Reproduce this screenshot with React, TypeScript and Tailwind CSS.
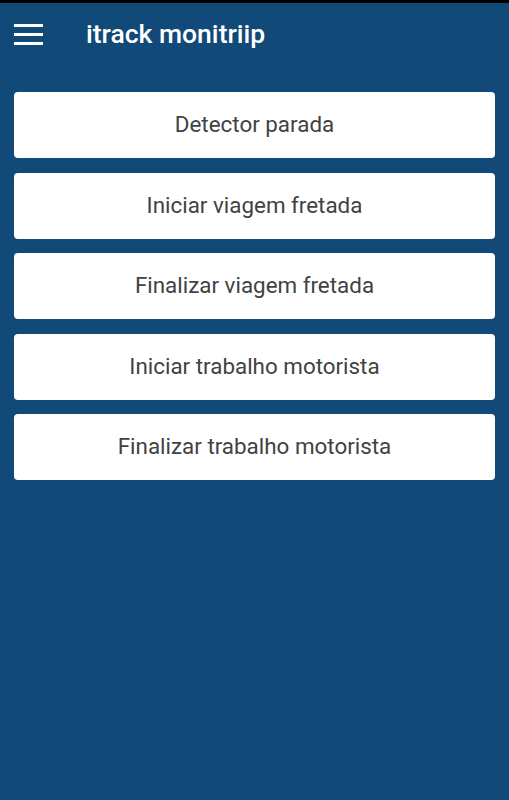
import { useState } from 'react';

const items = [
  'Detector parada',
  'Iniciar viagem fretada',
  'Finalizar viagem fretada',
  'Iniciar trabalho motorista',
  'Finalizar trabalho motorista',
];

export default function App() {
  const [selected, setSelected] = useState<string | null>(null);

  return (
    <div className="w-[509px] h-[800px] bg-[#114a79] font-['Roboto',sans-serif] flex flex-col">
      <div className="h-[3px] bg-black" />
      <header className="h-[62px] flex items-center">
        <button className="ml-[14px] w-[29px] flex flex-col gap-[6px]">
          <span className="h-[3px] bg-white" />
          <span className="h-[3px] bg-white" />
          <span className="h-[3px] bg-white" />
        </button>
        <h1 className="ml-[43px] text-white text-[26.5px] font-medium">itrack monitriip</h1>
      </header>

      <div className="px-[14px] pt-[27px] flex flex-col gap-[14.5px]">
        {items.map((item) => (
          <button
            key={item}
            onClick={() => setSelected(item)}
            className={`h-[66px] w-full bg-white rounded-[4px] text-[22.4px] text-[#424242] flex items-center justify-center ${
              selected === item ? 'bg-gray-100' : ''
            }`}
          >
            {item}
          </button>
        ))}
      </div>
    </div>
  );
}
